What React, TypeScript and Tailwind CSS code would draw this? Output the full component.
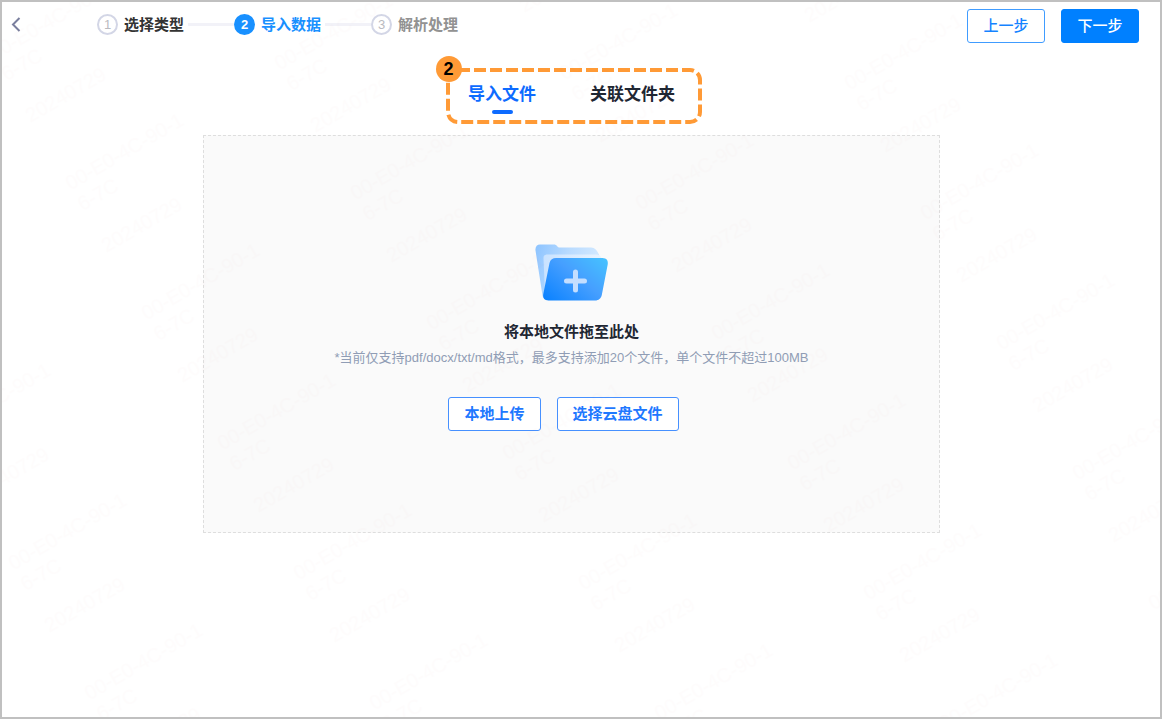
import React from "react";

type StepState = "done" | "active" | "pending";

const steps: { label: string; state: StepState }[] = [
  { label: "选择类型", state: "done" },
  { label: "导入数据", state: "active" },
  { label: "解析处理", state: "pending" },
];

const circleClass: Record<StepState, string> = {
  done: "border-2 border-[#d3d6e6] text-[#b9bac0]",
  active: "bg-[#1890ff] text-white font-bold",
  pending: "border-2 border-[#d3d6e6] text-[#b9bac0]",
};

const labelClass: Record<StepState, string> = {
  done: "text-[#333333]",
  active: "text-[#1890ff]",
  pending: "text-[#929292]",
};

function Steps() {
  return (
    <ol className="flex items-center">
      {steps.map((step, i) => (
        <li key={step.label} className="flex items-center">
          <span
            className={`flex size-[21px] items-center justify-center rounded-full text-[13px] leading-none ${circleClass[step.state]}`}
          >
            {i + 1}
          </span>
          <span className={`ml-1.5 text-[15px] leading-5 font-bold ${labelClass[step.state]}`}>{step.label}</span>
          {i < steps.length - 1 && <span className="ml-1 h-[3px] w-[46px] bg-[#f2f2f8]" />}
        </li>
      ))}
    </ol>
  );
}

function FolderIcon() {
  return (
    <svg width="76" height="64" viewBox="1 0 76 64" aria-hidden="true">
      <defs>
        <linearGradient id="back" x1="0" y1="0" x2="1" y2="0.3">
          <stop offset="0" stopColor="#8cc3ff" />
          <stop offset="0.5" stopColor="#b9dbff" />
          <stop offset="1" stopColor="#d6ebff" />
        </linearGradient>
        <linearGradient id="sheet" x1="0" y1="0" x2="1" y2="0">
          <stop offset="0" stopColor="#c9e2ff" />
          <stop offset="1" stopColor="#e9f4ff" />
        </linearGradient>
        <linearGradient id="front" x1="0" y1="0.9" x2="1" y2="0.1">
          <stop offset="0" stopColor="#0d83ff" />
          <stop offset="0.55" stopColor="#469fff" />
          <stop offset="1" stopColor="#46c0ff" />
        </linearGradient>
      </defs>
      <path d="M7 3.500h14c1.500 0 2 .5 3 1.500s1.500 1.500 3 1.500h31c4 0 6 3 8 7l3 12-53 33c-4 0-6-1-6.500-4L2.500 9.500C2 6 4 3.500 7 3.500z" fill="url(#back)" />
      <path d="M14.500 13.500h48c4 0 6 2 7 6l-55 38c-2-1-2-3-2.500-5L10.500 17.500c-.3-2.500 1-4 4-4z" fill="url(#sheet)" />
      <path d="M23 17h46.500c4 0 6 2.800 5.200 6.500L68.800 54c-.7 3.300-3.200 5.500-6.600 5.500H15.500c-4 0-6-2.800-5.200-6.500L16.500 22c.8-3.200 3.200-5 6.500-5z" fill="url(#front)" />
      <path d="M42.500 31v18M33.500 40h18" stroke="#c4deff" strokeWidth="5" strokeLinecap="round" fill="none" />
    </svg>
  );
}

const marks = [-1, 0, 1, 2, 3, 4]
  .flatMap((col) =>
    [-5, -4, -3, -2, -1, 0, 1].map((row) => ({
      left: 2 + col * 285 + row * 76,
      top: 552 + col * 10 + row * 130,
    })),
  )
  .filter((m) => m.left > -110 && m.left < 1150);

function Watermark() {
  return (
    <div aria-hidden="true" className="pointer-events-none absolute inset-0 overflow-hidden opacity-[0.009] select-none">
      {marks.map((m) => (
        <div
          key={`${m.left}:${m.top}`}
          style={{ left: m.left, top: m.top }}
          className="absolute origin-top-left -rotate-30 text-xl leading-6 whitespace-pre text-[#d00820]"
        >
          {"00-E0-4C-90-1\n6-7C\n\n20240729"}
        </div>
      ))}
    </div>
  );
}

const button = "h-[34px] rounded-[3px] border text-[15px] leading-5";

export default function App() {
  return (
    <div className="min-h-screen bg-white pb-px font-['Liberation_Sans','Noto_Sans_CJK_SC',sans-serif]">
      <div className="relative flex min-h-[calc(100vh-1px)] flex-col border-2 border-[#c0c0c0]">
        <header className="flex items-start justify-between pr-[21px] pl-2">
          <div className="flex items-center gap-[75px] pt-3">
            <button type="button" aria-label="返回" className="flex h-5 w-3 items-center justify-center">
              <svg width="10" height="16" viewBox="0 0 10 16" fill="none" stroke="#7a7f9e" strokeWidth="2" aria-hidden="true">
                <path d="M8.500 1 2 7.500l6.500 6.500" />
              </svg>
            </button>
            <Steps />
          </div>
          <div className="flex gap-4 pt-[7px]">
            <button type="button" className={`${button} w-[78px] border-[#409cff] bg-white font-medium text-[#1583ff]`}>
              上一步
            </button>
            <button type="button" className={`${button} w-[78px] border-[#0080ff] bg-[#0080ff] font-medium text-white`}>
              下一步
            </button>
          </div>
        </header>

        <main className="flex flex-col items-center pr-[19px]">
          <div className="relative mt-[25px] ml-1 flex h-14 w-64 justify-center gap-[54px] pt-[15px] pr-1">
            <svg className="absolute inset-0 size-full" viewBox="0 0 256 56" fill="none" aria-hidden="true">
              <rect x="2" y="2" width="252" height="52" rx="10" stroke="#ff9a36" strokeWidth="4" strokeDasharray="12 4" />
            </svg>
            <span className="absolute -top-3 -left-2.5 flex size-[26px] items-center justify-center rounded-full bg-[#ff9a36] text-lg leading-none font-bold text-black">
              2
            </span>
            <button type="button" className="relative flex flex-col items-center gap-1 text-[17px] leading-[23px] font-bold text-[#0d6bff]">
              导入文件
              <span className="h-1 w-[21px] rounded-full bg-[#0d6bff]" />
            </button>
            <button type="button" className="relative flex flex-col text-[17px] leading-[23px] font-bold text-[#1f2733]">
              关联文件夹
            </button>
          </div>

          <section className="mt-[11px] flex w-full max-w-[737px] flex-col items-center border border-dashed border-[#dedede] bg-[#fafafa] pt-[105px] pb-[101px]">
            <FolderIcon />
            <h1 className="mt-4 text-[15px] leading-[22px] font-bold text-[#1f2733]">将本地文件拖至此处</h1>
            <p className="mt-[5px] text-[13px] leading-5 text-[#909db5]">
              *当前仅支持pdf/docx/txt/md格式，最多支持添加20个文件，单个文件不超过100MB
            </p>
            <div className="mt-[29px] flex gap-4 pr-4">
              <button type="button" className={`${button} border-[#4690ff] bg-white px-[15px] font-bold text-[#1f78ff]`}>
                本地上传
              </button>
              <button type="button" className={`${button} border-[#4690ff] bg-white px-[15px] font-bold text-[#1f78ff]`}>
                选择云盘文件
              </button>
            </div>
          </section>
        </main>
        <Watermark />
      </div>
    </div>
  );
}
